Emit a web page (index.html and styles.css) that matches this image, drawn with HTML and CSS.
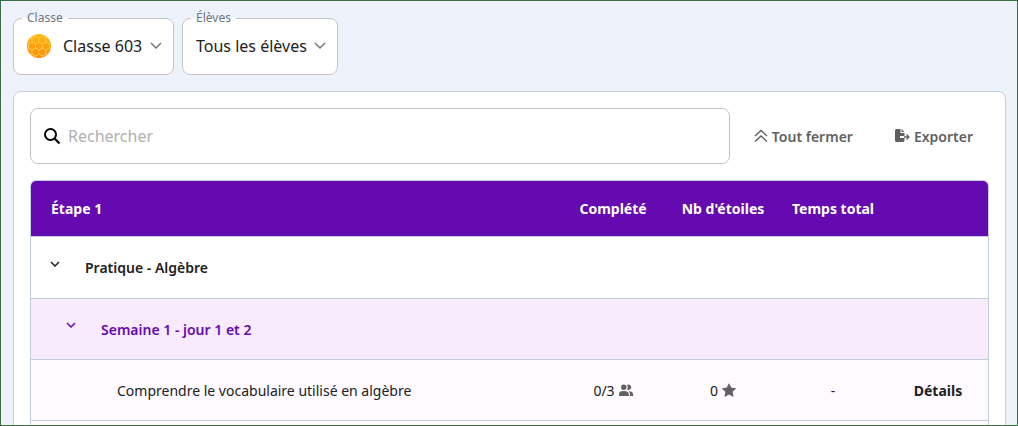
FILE: index.html
```html
<!DOCTYPE html>
<html lang="fr">
<head>
    <meta charset="UTF-8">
    <meta name="viewport" content="width=device-width, initial-scale=1.0">
    <title>Suivi des élèves</title>
    <link rel="stylesheet" href="styles.css">
</head>
<body>
    <div class="page">
        <div class="filters">
            <fieldset class="filter">
                <legend><label for="classe">Classe</label></legend>
                <div class="filter-body">
                    <svg class="class-icon" width="24" height="24" viewBox="0 0 24 24" aria-hidden="true">
                        <defs>
                            <linearGradient id="honey" x1="0" y1="0" x2="0" y2="1">
                                <stop offset="0" stop-color="#ffb70a"/>
                                <stop offset="1" stop-color="#ff8a0c"/>
                            </linearGradient>
                            <clipPath id="disc"><circle cx="12" cy="12" r="12"/></clipPath>
                        </defs>
                        <circle cx="12" cy="12" r="12" fill="url(#honey)"/>
                        <g clip-path="url(#disc)" fill="none" stroke="#ffcb4d" stroke-width="1">
                            <path d="M12 8l3.500 2v4L12 16l-3.500-2v-4zM5 8l3.500 2v4L5 16l-3.500-2v-4zM19 8l3.500 2v4L19 16l-3.500-2v-4z"/>
                            <path d="M5 8V4l3.500-2L12 4v4M12 4l3.500-2L19 4v4M8.500 2v-2M15.500 2v-2M5 4L1.500 2M19 4l3.500-2"/>
                            <path d="M5 16v4l3.500 2 3.500-2v-4M12 20l3.500 2 3.500-2v-4M8.500 22v2M15.500 22v2M5 20l-3.500 2M19 20l3.500 2"/>
                            <path d="M1.500 10L-2 8M1.500 14L-2 16M22.500 10L26 8M22.500 14l3.500 2"/>
                        </g>
                    </svg>
                    <select id="classe"><option>Classe 603</option></select>
                    <svg class="arrow" width="12" height="8" viewBox="0 0 12 8" aria-hidden="true"><path d="M1 1l5 5 5-5"/></svg>
                </div>
            </fieldset>
            <fieldset class="filter">
                <legend><label for="eleves">Élèves</label></legend>
                <div class="filter-body">
                    <select id="eleves"><option>Tous les élèves</option></select>
                    <svg class="arrow" width="12" height="8" viewBox="0 0 12 8" aria-hidden="true"><path d="M1 1l5 5 5-5"/></svg>
                </div>
            </fieldset>
        </div>

        <main class="card">
            <div class="toolbar">
                <label class="search">
                    <svg width="18" height="18" viewBox="0 0 18 18" aria-hidden="true">
                        <circle cx="7.500" cy="7.500" r="5.500" fill="none" stroke="#000" stroke-width="2"/>
                        <path d="M11.300 11.300l5.200 5.200" stroke="#000" stroke-width="2.200"/>
                    </svg>
                    <input type="text" placeholder="Rechercher" aria-label="Rechercher">
                </label>
                <div class="actions">
                    <button class="action">
                        <svg width="14" height="14" viewBox="0 0 14 14" aria-hidden="true">
                            <path d="M1 7l6-5.500L13 7M1 12.500L7 7l6 5.500" fill="none" stroke="currentColor" stroke-width="1.400"/>
                        </svg>
                        Tout fermer
                    </button>
                    <button class="action">
                        <svg width="15" height="14" viewBox="0 0 15 14" aria-hidden="true">
                            <path d="M1.500 0H5.500v4h4v3H5v2h4.500v2.500q0 1.500-1.500 1.500H1.500Q0 13 0 11.500v-10Q0 0 1.500 0zM6.500 0l3 3h-3z" fill="currentColor"/>
                            <path d="M9 8h4.500M11.500 5.500L14 8l-2.500 2.500" fill="none" stroke="currentColor" stroke-width="1.300"/>
                        </svg>
                        Exporter
                    </button>
                </div>
            </div>

            <table class="progress">
                <thead>
                    <tr>
                        <th class="name">Étape 1</th>
                        <th class="value">Complété</th>
                        <th class="value">Nb d'étoiles</th>
                        <th class="value">Temps total</th>
                        <th class="details"></th>
                    </tr>
                </thead>
                <tbody>
                    <tr class="chapter">
                        <td colspan="5">
                            <div class="title">
                                <button class="toggle" aria-label="Replier Pratique - Algèbre">
                                    <svg width="10" height="6" viewBox="0 0 10 6" aria-hidden="true"><path d="M1 1l4 4 4-4"/></svg>
                                </button>
                                Pratique - Algèbre
                            </div>
                        </td>
                    </tr>
                    <tr class="week">
                        <td colspan="5">
                            <div class="title">
                                <button class="toggle" aria-label="Replier Semaine 1">
                                    <svg width="10" height="6" viewBox="0 0 10 6" aria-hidden="true"><path d="M1 1l4 4 4-4"/></svg>
                                </button>
                                Semaine 1 - jour 1 et 2
                            </div>
                        </td>
                    </tr>
                    <tr class="lesson">
                        <td class="name">Comprendre le vocabulaire utilisé en algèbre</td>
                        <td class="value">
                            <span class="count">0/3
                                <svg width="14" height="12" viewBox="0 0 14 12" aria-hidden="true">
                                    <circle cx="4.800" cy="3.200" r="2.700"/>
                                    <path d="M8 .9a2.700 2.700 0 1 1 0 4.600 4 4 0 0 0 0-4.600z"/>
                                    <path d="M0 12v-2Q0 7 4.800 7t5 3v2zM10.900 12v-2q0-1.700-1.200-2.800Q14 7.500 14 10v2z"/>
                                </svg>
                            </span>
                        </td>
                        <td class="value">
                            <span class="count">0
                                <svg width="14" height="14" viewBox="0 0 14 14" aria-hidden="true">
                                    <path d="M7 .8l2 4.200 4.600.6-3.400 3.200.9 4.600L7 11.100l-4.100 2.300.9-4.600L.4 5.600 5 5z" stroke="#616161" stroke-linejoin="round" stroke-width=".8"/>
                                </svg>
                            </span>
                        </td>
                        <td class="value">-</td>
                        <td class="details"><a href="#">Détails</a></td>
                    </tr>
                    <tr class="lesson">
                        <td colspan="5"></td>
                    </tr>
                </tbody>
            </table>
        </main>
    </div>
</body>
</html>
```
FILE: styles.css
```css
* {
    box-sizing: border-box;
}

body {
    margin: 0;
    font-family: "Noto Sans", sans-serif;
    font-size: 14px;
    color: #212121;
}

.page {
    height: 100vh;
    overflow: hidden;
    padding: 8px 11px 0 12px;
    border: 1px solid #3c6e46;
    background-color: #eef3fb;
}

button,
input,
select {
    font: inherit;
    color: inherit;
    border: none;
    background: none;
    padding: 0;
    margin: 0;
}

button {
    cursor: pointer;
}

.filters {
    display: flex;
    gap: 8px;
    margin-bottom: 16px;
}

.filter {
    margin: 0;
    padding: 0 11px 9px 13px;
    border: 1px solid #c4c4c4;
    border-radius: 8px;
    background-color: white;
}

.filter legend {
    margin-left: -5px;
    padding: 0 5px;
    font-size: 12px;
    line-height: 18px;
    color: #6b7480;
}

.filter-body {
    display: flex;
    align-items: center;
    height: 38px;
}

.filter select {
    appearance: none;
    font-size: 16px;
    outline: none;
}

.class-icon {
    margin-right: 12px;
}

.arrow {
    margin-left: 7px;
    fill: none;
    stroke: #757575;
    stroke-width: 1.5;
}

.card {
    padding: 16px;
    border: 1px solid #c3cfdf;
    border-radius: 8px;
    background-color: white;
}

.toolbar {
    display: flex;
    align-items: center;
    margin-bottom: 16px;
}

.search {
    flex: 1;
    display: flex;
    align-items: center;
    gap: 7px;
    height: 56px;
    padding: 0 12px;
    border: 1px solid #c4c4c4;
    border-radius: 8px;
}

.search input {
    flex: 1;
    font-size: 16px;
    outline: none;
}

.search input::placeholder {
    color: #b0b0b0;
}

.actions {
    display: flex;
    gap: 42px;
    padding: 0 16px 0 24px;
}

.action {
    display: flex;
    align-items: center;
    gap: 4px;
    font-weight: 600;
    color: #616161;
}

.progress {
    width: 100%;
    table-layout: fixed;
    border: 1px solid #c3cfdf;
    border-radius: 6px;
    border-spacing: 0;
    overflow: hidden;
}

.progress th {
    height: 56px;
    padding: 0;
    border-bottom: 1px solid #c3cfdf;
    background-color: #650ab0;
    color: white;
    font-weight: 700;
}

.progress td {
    height: 61px;
    padding: 0;
    border-bottom: 1px solid #c3cfdf;
}

.progress th.name {
    padding-left: 20px;
    text-align: left;
}

.progress .value {
    width: 110px;
    text-align: center;
}

.progress .details {
    width: 100px;
    text-align: center;
}

.title {
    display: flex;
    align-items: center;
    gap: 25px;
    padding-left: 19px;
    font-weight: 600;
}

.toggle {
    display: flex;
    padding-bottom: 8px;
}

.toggle svg {
    fill: none;
    stroke: currentColor;
    stroke-width: 1.5;
}

.progress .chapter td {
    height: 62px;
}

.week td {
    background-color: #f8ebfe;
    color: #650ab0;
}

.week .title {
    padding-left: 35px;
}

.lesson td {
    background-color: #fffaff;
}

.progress .lesson .name {
    padding-left: 86px;
}

.count {
    display: flex;
    align-items: center;
    justify-content: center;
    gap: 4px;
}

.count svg {
    fill: #616161;
}

.details a {
    color: inherit;
    font-weight: 700;
    text-decoration: none;
}
```
